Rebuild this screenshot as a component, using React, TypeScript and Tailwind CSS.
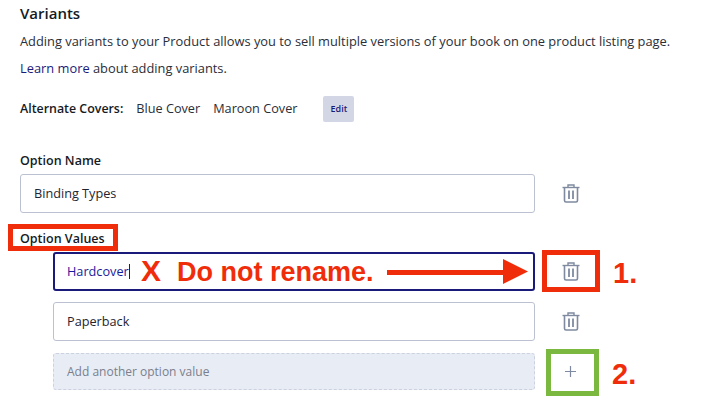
const FONT = "font-['Open_Sans','Noto_Sans',sans-serif]";
const MARK = "font-['Liberation_Sans',Arial,sans-serif] font-bold text-[#f02d0a]";

function TrashIcon() {
  return (
    <svg width="18" height="19" viewBox="0 0 18 19" fill="none" stroke="#7f8aa0" strokeWidth="1.4">
      <path d="M0.5 3.5H17.5" />
      <path d="M6 3.5V1H12V3.5" />
      <path d="M2.5 3.5V16.5C2.5 17.4 3.1 18 4 18H14C14.9 18 15.5 17.4 15.5 16.5V3.5" strokeWidth="1.6" />
      <path d="M7 6.5V15" strokeWidth="1.8" />
      <path d="M11 6.5V15" strokeWidth="1.8" />
    </svg>
  );
}

function Row({ value, active, className }: { value: string; active?: boolean; className: string }) {
  return (
    <div className={`flex items-center ${className}`}>
      <div
        className={`flex-1 flex items-center rounded-[3px] bg-white text-[12.7px] h-[39px] ${
          active ? 'border-2 border-[#1a1a7a] pl-[12px] text-[#1a1a9c]' : 'border border-[#bcc1d2] pl-[13px] text-[#1f2430]'
        }`}
      >
        {value}
        {active && <span className="w-px h-[15px] bg-[#1a1a7a]" />}
      </div>
      <div className="w-[71px] flex justify-center">
        <TrashIcon />
      </div>
    </div>
  );
}

export default function App() {
  return (
    <div className={`relative w-[718px] h-[416px] overflow-hidden bg-white pl-[20px] pr-[112px] pt-[3px] text-[#2a2e38] ${FONT}`}>
      <h2 className="text-[15px] leading-[20px] font-semibold text-[#161a24]">Variants</h2>
      <p className="mt-[9px] w-[680px] text-[12.85px] leading-[18px] whitespace-nowrap">
        Adding variants to your Product allows you to sell multiple versions of your book on one product listing page.
      </p>
      <p className="mt-[9px] text-[12.85px] leading-[18px]">
        <span className="text-[#1a1a7a]">Learn more</span> about adding variants.
      </p>

      <div className="mt-[19px] flex items-center text-[12.7px] h-[26px]">
        <span className="text-[12.4px] font-semibold text-[#161a24]">Alternate Covers:</span>
        <span className="ml-[13px]">Blue Cover</span>
        <span className="ml-[13px]">Maroon Cover</span>
        <span className="ml-[26px] flex h-[26px] w-[31px] items-center justify-center rounded-[2px] bg-[#d3d7e5] text-[9px] font-semibold text-[#1a1a7a]">
          Edit
        </span>
      </div>

      <div className="mt-[31px] text-[12.5px] leading-[16px] font-semibold text-[#161a24]">Option Name</div>
      <Row value="Binding Types" className="mt-[5px]" />

      <div className="mt-[18px] text-[12.5px] leading-[16px] font-semibold text-[#161a24]">Option Values</div>
      <div className="mt-[5px] pl-[33px] flex flex-col gap-[11px]">
        <Row value="Hardcover" active className="" />
        <Row value="Paperback" className="" />
        <div className="mt-[1px] flex items-center">
          <div className="flex-1 flex h-[37px] items-center rounded-[3px] border border-dashed border-[#ccd1e0] bg-[#e8ecf5] pl-[13px] text-[12px] text-[#7a7f8c]">
            Add another option value
          </div>
          <div className="w-[71px] flex justify-center">
            <svg width="13" height="13" viewBox="0 0 13 13" stroke="#7f8aa0" strokeWidth="1.2">
              <path d="M6.5 1V12M1 6.5H12" />
            </svg>
          </div>
        </div>
      </div>

      {/* annotations on top of the screenshot */}
      <div className="absolute left-[8px] top-[224px] w-[110px] h-[27px] border-[5px] border-[#f02d0a]" />
      <div className={`absolute left-[141px] top-[254px] text-[30px] leading-[34px] ${MARK}`}>X</div>
      <div className={`absolute left-[177px] top-[256px] text-[27px] leading-[32px] whitespace-nowrap ${MARK}`}>Do not rename.</div>
      <div className="absolute left-[387px] top-[270px] w-[116px] h-[5px] bg-[#f02d0a]" />
      <svg className="absolute left-[503px] top-[259px]" width="25" height="25" viewBox="0 0 25 25">
        <polygon points="0,0 25,12.5 0,25" fill="#f02d0a" />
      </svg>
      <div className="absolute left-[542px] top-[250px] w-[58px] h-[42px] border-[5px] border-[#f02d0a]" />
      <div className={`absolute left-[613px] top-[256px] text-[29px] leading-[34px] ${MARK}`}>1.</div>
      <div className="absolute left-[546px] top-[349px] w-[53px] h-[47px] border-[5px] border-[#7ab840]" />
      <div className={`absolute left-[612px] top-[357px] text-[29px] leading-[34px] ${MARK}`}>2.</div>
    </div>
  );
}
